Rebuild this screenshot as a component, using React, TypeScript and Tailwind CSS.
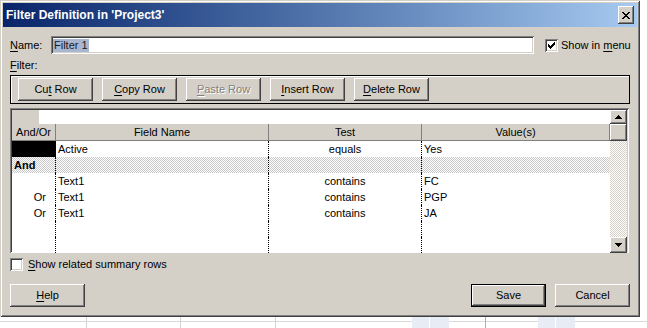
import type { ReactNode } from "react"

// classic 3d bevels
const raised =
  "shadow-[inset_-1px_-1px_#404040,inset_1px_1px_#ffffff,inset_-2px_-2px_#808080,inset_2px_2px_#d4d0c8]"
const sunken =
  "shadow-[inset_1px_1px_#808080,inset_-1px_-1px_#ffffff,inset_2px_2px_#404040,inset_-2px_-2px_#d4d0c8]"
const dither =
  "bg-[image:repeating-conic-gradient(#c8c8c8_0_25%,#ffffff_0_50%)] bg-[length:2px_2px]"
const trackDither =
  "bg-[image:repeating-conic-gradient(#d4d0c8_0_25%,#ffffff_0_50%)] bg-[length:2px_2px]"

type Row = {
  andOr: string
  field: string
  test: string
  value: string
  selected?: boolean
  group?: boolean
}

const rows: Row[] = [
  { andOr: "", field: "Active", test: "equals", value: "Yes", selected: true },
  { andOr: "And", field: "", test: "", value: "", group: true },
  { andOr: "", field: "Text1", test: "contains", value: "FC" },
  { andOr: "Or", field: "Text1", test: "contains", value: "PGP" },
  { andOr: "Or", field: "Text1", test: "contains", value: "JA" },
  { andOr: "", field: "", test: "", value: "" },
  { andOr: "", field: "", test: "", value: "" },
]

function Mn({ text, u }: { text: string; u?: number }) {
  if (u === undefined) return <span>{text}</span>
  return (
    <span className="whitespace-pre">
      {text.slice(0, u)}
      <span className="underline decoration-1 underline-offset-[2px]">{text[u]}</span>
      {text.slice(u + 1)}
    </span>
  )
}

function Pixels({ w, h, px, className }: { w: number; h: number; px: [number, number][]; className?: string }) {
  return (
    <svg className={className} width={w} height={h} viewBox={`0 0 ${w} ${h}`} shapeRendering="crispEdges">
      {px.map(([x, y], i) => (
        <rect key={i} x={x} y={y} width={1} height={1} fill="#000" />
      ))}
    </svg>
  )
}

const checkPx: [number, number][] = [
  [6, 0],
  [5, 1], [6, 1],
  [0, 2], [4, 2], [5, 2], [6, 2],
  [0, 3], [1, 3], [3, 3], [4, 3], [5, 3],
  [0, 4], [1, 4], [2, 4], [3, 4], [4, 4],
  [1, 5], [2, 5], [3, 5],
  [2, 6],
]

const closePx: [number, number][] = [
  [0, 0], [1, 0], [6, 0], [7, 0],
  [1, 1], [2, 1], [5, 1], [6, 1],
  [2, 2], [3, 2], [4, 2], [5, 2],
  [3, 3], [4, 3],
  [2, 4], [3, 4], [4, 4], [5, 4],
  [1, 5], [2, 5], [5, 5], [6, 5],
  [0, 6], [1, 6], [6, 6], [7, 6],
]

const upPx: [number, number][] = [
  [3, 0],
  [2, 1], [3, 1], [4, 1],
  [1, 2], [2, 2], [3, 2], [4, 2], [5, 2],
  [0, 3], [1, 3], [2, 3], [3, 3], [4, 3], [5, 3], [6, 3],
]
const downPx: [number, number][] = upPx.map(([x, y]) => [x, 3 - y])

function CheckBox({ checked }: { checked?: boolean }) {
  return (
    <div className={`flex h-[13px] w-[13px] shrink-0 items-center justify-center bg-white ${sunken}`}>
      {checked && <Pixels w={7} h={7} px={checkPx} />}
    </div>
  )
}

function WinButton({
  label,
  u,
  disabled,
  isDefault,
}: {
  label: string
  u?: number
  disabled?: boolean
  isDefault?: boolean
}) {
  const face = (
    <div
      className={`flex h-full w-full items-center justify-center bg-[#d4d0c8] ${raised} ${
        disabled ? "text-[#808080] [text-shadow:1px_1px_0_#ffffff]" : "text-black"
      }`}
    >
      <Mn text={label} u={u} />
    </div>
  )
  if (isDefault) return <div className="h-[23px] w-[75px] border border-black">{face}</div>
  return <div className="h-[23px] w-[75px]">{face}</div>
}

function HeaderCell({ children, className }: { children: ReactNode; className: string }) {
  return (
    <div className={`flex h-full items-center justify-center border-r border-[#808080] ${className}`}>
      {children}
    </div>
  )
}

function FilterGrid() {
  return (
    <div className={`mt-[4px] flex h-[145px] w-[619px] bg-white p-[2px] pb-0 ${sunken}`}>
      <div className="flex min-w-0 flex-1 flex-col">
        {/* edit bar */}
        <div className="flex h-[14px]">
          <div className="w-[27px] bg-[#d4d0c8]" />
          <div className="flex-1 bg-white" />
        </div>
        {/* column headers */}
        <div className="flex h-[17px] border-b border-[#808080] bg-[#d4d0c8]">
          <HeaderCell className="w-[44px]">And/Or</HeaderCell>
          <HeaderCell className="w-[213px]">Field Name</HeaderCell>
          <HeaderCell className="w-[153px]">Test</HeaderCell>
          <HeaderCell className="w-[188px]">Value(s)</HeaderCell>
        </div>
        {rows.map((r, i) => (
          <div key={i} className={`flex h-[16px] leading-[16px] ${r.group ? dither : "bg-white"}`}>
            <div
              className={`w-[44px] border-r border-dotted border-black ${
                r.selected ? "bg-black" : ""
              } ${r.group ? "pl-[2px] font-bold" : "pr-[9px] text-right"}`}
            >
              {r.andOr}
            </div>
            <div className="w-[213px] border-r border-dotted border-black pl-[2px]">{r.field}</div>
            <div className="w-[153px] border-r border-dotted border-black text-center">{r.test}</div>
            <div className="w-[188px] pl-[2px]">{r.value}</div>
          </div>
        ))}
      </div>
      {/* vertical scroll bar */}
      <div className="flex w-[17px] flex-col">
        <div className={`flex h-[14px] items-center justify-center bg-[#d4d0c8] ${raised}`}>
          <Pixels w={7} h={4} px={upPx} />
        </div>
        <div className={`h-[17px] bg-[#d4d0c8] ${raised}`} />
        <div className={`flex-1 ${trackDither}`} />
        <div className={`flex h-[16px] items-center justify-center bg-[#d4d0c8] ${raised}`}>
          <Pixels w={7} h={4} px={downPx} />
        </div>
      </div>
    </div>
  )
}

function FilterDialog() {
  return (
    <div
      className={`flex h-[317px] w-[640px] shrink-0 flex-col bg-[#d4d0c8] p-[3px] shadow-[inset_1px_1px_#d4d0c8,inset_-1px_-1px_#404040,inset_2px_2px_#ffffff,inset_-2px_-2px_#808080]`}
    >
      {/* title bar */}
      <div className="flex h-[24px] items-center justify-between bg-gradient-to-r from-[#0a246a] to-[#a6caf0] pl-[3px] pr-[3px]">
        <span className="text-[12px] font-bold text-white">Filter Definition in 'Project3'</span>
        <div className={`flex h-[18px] w-[16px] items-center justify-center bg-[#d4d0c8] ${raised}`}>
          <Pixels w={8} h={7} px={closePx} />
        </div>
      </div>

      <div className="flex flex-1 flex-col pl-[7px]">
        {/* name */}
        <div className="mt-[9px] flex h-[18px] items-center">
          <span className="w-[41px]">
            <Mn text="Name:" u={0} />
          </span>
          <div className={`flex h-[18px] w-[483px] items-center bg-white px-[2px] ${sunken}`}>
            <span className="bg-[#a9b6d0] px-[1px] leading-[13px] text-[#1b1b1b]">Filter 1</span>
          </div>
          <div className="ml-[11px] flex items-center gap-[3px]">
            <CheckBox checked />
            <Mn text="Show in menu" u={8} />
          </div>
        </div>

        <div className="mt-[4px] h-[14px] leading-[14px]">
          <Mn text="Filter:" u={0} />
        </div>

        {/* row actions */}
        <div className="mt-[3px] flex h-[29px] w-[620px] items-center gap-[9px] border border-black pl-[7px] shadow-[inset_1px_1px_#ffffff]">
          <WinButton label="Cut Row" u={2} />
          <WinButton label="Copy Row" u={0} />
          <WinButton label="Paste Row" u={0} disabled />
          <WinButton label="Insert Row" u={0} />
          <WinButton label="Delete Row" u={0} />
        </div>

        <FilterGrid />

        <div className="mt-[5px] flex h-[13px] items-center gap-[5px]">
          <CheckBox />
          <Mn text="Show related summary rows" u={0} />
        </div>

        <div className="mt-[13px] flex w-[620px] items-center">
          <WinButton label="Help" u={0} />
          <div className="flex-1" />
          <WinButton label="Save" isDefault />
          <div className="w-[9px]" />
          <WinButton label="Cancel" />
        </div>
      </div>
    </div>
  )
}

export default function App() {
  return (
    <div className="flex h-[328px] w-[647px] flex-col overflow-hidden bg-white font-['Liberation_Sans',Arial,sans-serif] text-[11px] text-black">
      <div className="flex">
        <FilterDialog />
        <div className="flex-1 bg-white" />
      </div>
      {/* sheet behind the dialog */}
      <div className="flex h-[11px] bg-[image:linear-gradient(to_bottom,transparent_4px,#dadada_4px,#dadada_5px,transparent_5px)]">
        <div className="w-[87px] border-r border-[#d4d4d4]" />
        <div className="w-[94px] border-r border-[#d4d4d4]" />
        <div className="w-[95px] border-r border-[#d4d4d4]" />
        <div className="w-[136px]" />
        <div className="w-[18px] border-r border-white bg-[#e8edf5]" />
        <div className="w-[19px] bg-[#e8edf5]" />
        <div className="w-[36px]" />
        <div className="w-[1px] bg-[#e8a060]" />
        <div className="w-[52px]" />
        <div className="w-[18px] border-r border-white bg-[#e8edf5]" />
        <div className="w-[19px] bg-[#e8edf5]" />
        <div className="flex-1" />
      </div>
    </div>
  )
}
